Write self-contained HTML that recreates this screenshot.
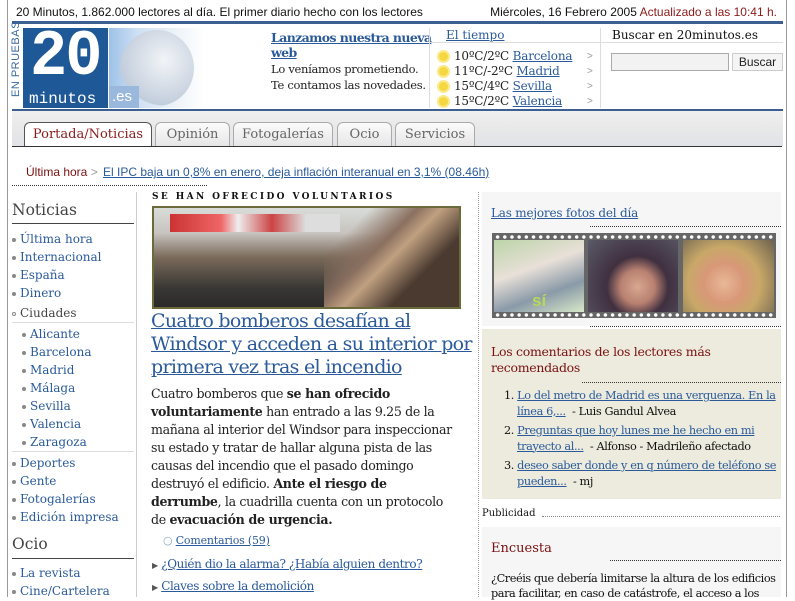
<!DOCTYPE html>
<html><head><meta charset="utf-8"><style>
*{margin:0;padding:0;box-sizing:border-box}
body{width:795px;height:597px;overflow:hidden;background:#fff;position:relative;font-family:"DejaVu Serif",serif;color:#222}
.a{position:absolute}
a{color:#2a5a9a;text-decoration:underline}
.sans{font-family:"Liberation Sans",sans-serif}
.nav{font-size:12px;line-height:18px;color:#2a5a9a}
.nav div{height:18px;white-space:nowrap}
.dot{display:inline-block;width:4px;height:4px;border-radius:50%;background:#888;margin-right:4px;vertical-align:middle}
.tab{position:absolute;top:122px;height:24px;border:1px solid #aaa;border-bottom:none;border-radius:6px 6px 0 0;background:linear-gradient(#fbfbfb,#e6e6e6);font-size:13px;color:#666;text-align:center;line-height:24px}
.sun{display:inline-block;width:9px;height:9px;border-radius:50%;background:#f5d840;box-shadow:0 0 0 2px #fbe98a;margin:0 6px 0 2px;vertical-align:middle}
.wx div{height:15px;line-height:15px;white-space:nowrap}
.photo{position:absolute;top:240px;height:72px}
</style></head><body>
<div class="a" style="left:7px;top:0;width:1px;height:597px;background:#999"></div>
<div class="a" style="left:786px;top:0;width:1px;height:597px;background:#999"></div>
<div class="a sans" style="left:16px;top:5px;font-size:12px;color:#111">20 Minutos, 1.862.000 lectores al día. El primer diario hecho con los lectores</div>
<div class="a sans" style="right:18px;top:5px;font-size:12px;color:#111">Miércoles, 16 Febrero 2005 <span style="color:#8a1a1a">Actualizado a las 10:41 h.</span></div>
<div class="a" style="left:12px;top:21px;width:771px;height:3px;background:#3a5f90"></div>
<div class="a sans" style="left:10px;top:97px;font-size:11px;color:#3a6aa0;transform:rotate(-90deg);transform-origin:0 0;white-space:nowrap;letter-spacing:.5px">EN PRUEBAS</div>
<div class="a" style="left:23px;top:28px;width:85px;height:80px;background:#1e5896"></div>
<div class="a" style="left:30px;top:22px;font:bold 62px/70px 'Liberation Mono',monospace;color:#fff;letter-spacing:-2px;transform:scaleY(1.05)">20</div>
<div class="a" style="left:29px;top:90px;font:16px 'Liberation Mono',monospace;color:#fff">minutos</div>
<div class="a" style="left:109px;top:28px;width:96px;height:80px;background:linear-gradient(90deg,#9ec2e8 0,#cfe0f3 30%,#eef3f8 70%,#fff)"></div>
<div class="a" style="left:120px;top:30px;width:74px;height:76px;border-radius:50%;background:radial-gradient(circle at 60% 40%,#f2f4f7,#c2cddc 70%,transparent 72%)"></div>
<div class="a" style="left:109px;top:86px;width:30px;height:22px;background:#9ab8dc"></div>
<div class="a sans" style="left:112px;top:88px;font-size:15px;color:#fff">.es</div>
<div class="a" style="left:271px;top:30px;font-size:12.5px;font-weight:bold;line-height:15px;width:165px;letter-spacing:-0.6px"><a>Lanzamos nuestra nueva web</a></div>
<div class="a" style="left:271px;top:61px;font-size:11.5px;line-height:16px;color:#222;white-space:nowrap;letter-spacing:-0.3px">Lo veníamos prometiendo.<br>Te contamos las novedades.</div>
<div class="a" style="left:429px;top:28px;width:1px;height:80px;background:#ddd"></div>
<div class="a" style="left:430px;top:42px;width:170px;height:1px;background:#ddd"></div>
<div class="a" style="left:446px;top:28px;font-size:12px"><a>El tiempo</a></div>
<div class="a wx" style="left:437px;top:49px;font-size:12px;color:#222;letter-spacing:-0.2px">
<div><span class="sun"></span>10ºC/2ºC <a>Barcelona</a></div>
<div><span class="sun"></span>11ºC/-2ºC <a>Madrid</a></div>
<div><span class="sun"></span>15ºC/4ºC <a>Sevilla</a></div>
<div><span class="sun"></span>15ºC/2ºC <a>Valencia</a></div>
</div>
<div class="a sans" style="left:587px;top:49px;font-size:10px;line-height:15px;color:#999">&gt;<br>&gt;<br>&gt;<br>&gt;</div>
<div class="a" style="left:600px;top:28px;width:1px;height:80px;background:#ddd"></div>
<div class="a" style="left:601px;top:42px;width:182px;height:1px;background:#ddd"></div>
<div class="a" style="left:612px;top:28px;font-size:12px;color:#111">Buscar en 20minutos.es</div>
<div class="a" style="left:611px;top:53px;width:118px;height:18px;border:1px solid #aaa;background:#f2f2f2"></div>
<div class="a sans" style="left:732px;top:53px;width:51px;height:18px;border:1px solid #ccc;background:#f4f4f4;font-size:12px;text-align:center;line-height:16px">Buscar</div>
<div class="a" style="left:12px;top:109px;width:771px;height:2px;background:#3a5f90"></div>
<div class="a" style="left:12px;top:111px;width:771px;height:35px;background:linear-gradient(#f0f0f0,#e8e8e8 50%,#e0e3e8)"></div>
<div class="tab" style="left:24px;width:128px;height:25px;background:#fff;color:#8a1a1a;border-color:#555">Portada/Noticias</div>
<div class="tab" style="left:155px;width:75px">Opinión</div>
<div class="tab" style="left:233px;width:100px">Fotogalerías</div>
<div class="tab" style="left:337px;width:55px">Ocio</div>
<div class="tab" style="left:395px;width:80px">Servicios</div>
<div class="a" style="left:12px;top:146px;width:770px;height:1px;background:#333"></div>
<div class="a sans" style="left:26px;top:165px;font-size:12px;color:#7a1010">Última hora <span style="color:#999">&gt;</span></div>
<div class="a sans" style="left:103px;top:165px;font-size:12px"><a>El IPC baja un 0,8% en enero, deja inflación interanual en 3,1% (08.46h)</a></div>
<div class="a" style="left:12px;top:185px;width:195px;border-top:1px dotted #333"></div>
<div class="a" style="left:136px;top:192px;width:1px;height:405px;background:#ccc"></div>
<div class="a" style="left:12px;top:201px;font-size:15.5px;color:#444">Noticias</div>
<div class="a" style="left:12px;top:223px;width:122px;height:1px;background:#444"></div>
<div class="a nav" style="left:12px;top:230px">
<div><span class="dot"></span>Última hora</div>
<div><span class="dot"></span>Internacional</div>
<div><span class="dot"></span>España</div>
<div><span class="dot"></span>Dinero</div>
<div style="margin-top:2px;color:#444"><span class="dot" style="background:#fff;border:1px solid #888"></span>Ciudades</div>
</div>
<div class="a" style="left:12px;top:322px;width:122px;height:1px;background:#ddd"></div>
<div class="a nav" style="left:22px;top:325px">
<div><span class="dot"></span>Alicante</div><div><span class="dot"></span>Barcelona</div><div><span class="dot"></span>Madrid</div><div><span class="dot"></span>Málaga</div><div><span class="dot"></span>Sevilla</div><div><span class="dot"></span>Valencia</div><div><span class="dot"></span>Zaragoza</div>
</div>
<div class="a" style="left:12px;top:451px;width:122px;height:1px;background:#ddd"></div>
<div class="a nav" style="left:12px;top:454px">
<div><span class="dot"></span>Deportes</div><div><span class="dot"></span>Gente</div><div><span class="dot"></span>Fotogalerías</div><div><span class="dot"></span>Edición impresa</div>
</div>
<div class="a" style="left:12px;top:535px;font-size:15.5px;color:#444">Ocio</div>
<div class="a" style="left:12px;top:558px;width:122px;height:1px;background:#444"></div>
<div class="a nav" style="left:12px;top:564px">
<div><span class="dot"></span>La revista</div><div><span class="dot"></span>Cine/Cartelera</div>
</div>
<div class="a" style="left:152px;top:192px;font-size:9px;letter-spacing:2.4px;color:#111;font-weight:bold">SE HAN OFRECIDO VOLUNTARIOS</div>
<div class="a" style="left:152px;top:206px;width:309px;height:103px;border:2px solid #6a6a3a;background:linear-gradient(180deg,#d8dcd8 0,#c8c4c0 25%,#7a6a5a 50%,#3a3835 80%,#2a2a2a);overflow:hidden">
<div class="a" style="left:16px;top:6px;width:170px;height:18px;background:linear-gradient(90deg,#c33 0,#e66 30%,#eee 40%,#c44 60%,#ddd 80%)"></div>
<div class="a" style="left:170px;top:0;width:137px;height:99px;background:linear-gradient(135deg,transparent 20%,#8a7060 40%,#c0a080 50%,#4a3a30 70%)"></div>
</div>
<div class="a" style="left:151px;top:310px;font-size:19px;line-height:23px;width:322px;letter-spacing:-0.7px"><a>Cuatro bomberos desafían al Windsor y acceden a su interior por primera vez tras el incendio</a></div>
<div class="a" style="left:151px;top:385px;font-size:12.6px;line-height:18px;width:306px;color:#222;letter-spacing:-0.35px">Cuatro bomberos que <b>se han ofrecido voluntariamente</b> han entrado a las 9.25 de la mañana al interior del Windsor para inspeccionar su estado y tratar de hallar alguna pista de las causas del incendio que el pasado domingo destruyó el edificio. <b>Ante el riesgo de derrumbe</b>, la cuadrilla cuenta con un protocolo de <b>evacuación de urgencia.</b></div>
<div class="a" style="left:163px;top:534px;font-size:11px;letter-spacing:-0.2px"><span style="color:#8ab">&#9675;</span> <a>Comentarios (59)</a></div>
<div class="a" style="left:152px;top:557px;font-size:12px;letter-spacing:-0.4px"><span style="font-size:8px;color:#555">&#9654;</span> <a>¿Quién dio la alarma? ¿Había alguien dentro?</a></div>
<div class="a" style="left:152px;top:579px;font-size:12px;letter-spacing:-0.4px"><span style="font-size:8px;color:#555">&#9654;</span> <a>Claves sobre la demolición</a></div>
<div class="a" style="left:478px;top:192px;height:405px;border-left:1px dotted #999"></div>
<div class="a" style="left:482px;top:192px;width:299px;height:134px;background:#f6f6f6"></div>
<div class="a" style="left:491px;top:206px;font-size:12px;letter-spacing:-0.2px"><a>Las mejores fotos del día</a></div>
<div class="a" style="left:590px;top:226px;width:191px;border-top:1px dotted #333"></div>
<div class="a" style="left:492px;top:233px;width:284px;height:85px;background:#666"></div>
<div class="a" style="left:494px;top:235px;width:280px;height:4px;background:radial-gradient(circle,#fff 1.5px,transparent 2px) 0 0/7.2px 4px"></div>
<div class="a" style="left:494px;top:313px;width:280px;height:4px;background:radial-gradient(circle,#fff 1.5px,transparent 2px) 0 0/7.2px 4px"></div>
<div class="photo" style="left:494px;width:90px;background:linear-gradient(160deg,#bcd4a8,#e8e0d8 40%,#8a9aa8 70%,#d8e8c8)"></div>
<div class="a sans" style="left:532px;top:291px;font-size:17px;font-weight:bold;color:#b8d858">sí</div>
<div class="photo" style="left:588px;width:90px;background:radial-gradient(circle at 55% 65%,#d8a890 0,#b88070 25%,#403040 45%,#5a5a68)"></div>
<div class="photo" style="left:683px;width:91px;background:radial-gradient(circle at 45% 60%,#e8b898 0,#d89878 30%,#c8a868 55%,#6a6050)"></div>
<div class="a" style="left:590px;top:326px;width:191px;border-top:1px dotted #333"></div>
<div class="a" style="left:482px;top:329px;width:299px;height:170px;background:#ecebde"></div>
<div class="a" style="left:491px;top:344px;font-size:12.5px;line-height:16px;color:#7a1010;width:270px;letter-spacing:-0.3px">Los comentarios de los lectores más recomendados</div>
<div class="a" style="left:582px;top:382px;width:199px;border-top:1px dotted #333"></div>
<div class="a" style="left:504px;top:388px;font-size:11.3px;line-height:15.5px;width:278px;color:#111;letter-spacing:-0.4px">
<div style="padding-left:13px;text-indent:-13px;margin-bottom:4px">1. <a>Lo del metro de Madrid es una verguenza. En la línea 6,...</a> &nbsp;- Luis Gandul Alvea</div>
<div style="padding-left:13px;text-indent:-13px;margin-bottom:4px">2. <a>Preguntas que hoy lunes me he hecho en mi trayecto al...</a> &nbsp;- Alfonso - Madrileño afectado</div>
<div style="padding-left:13px;text-indent:-13px">3. <a>deseo saber donde y en q número de teléfono se pueden...</a> &nbsp;- mj</div>
</div>
<div class="a" style="left:482px;top:508px;font-size:10px;color:#111">Publicidad</div>
<div class="a" style="left:542px;top:516px;width:238px;border-top:1px dotted #888"></div>
<div class="a" style="left:482px;top:527px;width:299px;height:70px;background:#f6f6f6"></div>
<div class="a" style="left:491px;top:541px;font-size:13px;color:#7a1010">Encuesta</div>
<div class="a" style="left:610px;top:560px;width:171px;border-top:1px dotted #333"></div>
<div class="a" style="left:491px;top:571px;font-size:11.3px;line-height:15px;width:292px;color:#111;letter-spacing:-0.45px">¿Creéis que debería limitarse la altura de los edificios para facilitar, en caso de catástrofe, el acceso a los</div>
</body></html>
